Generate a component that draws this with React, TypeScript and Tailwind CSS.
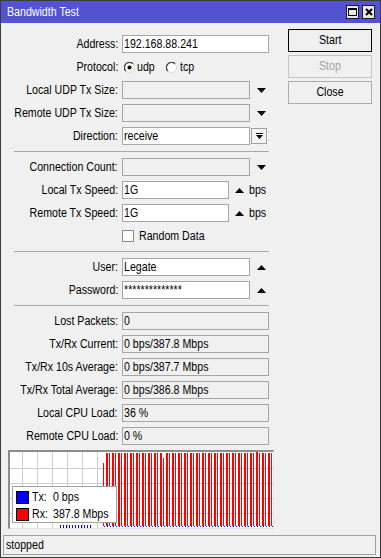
import React from 'react';

type Kids = { children?: React.ReactNode };

// narrow text: the reference uses a condensed face, squeeze a regular one
const N: React.FC<Kids & { o?: string }> = ({ children, o = 'origin-left' }) => (
  <span className={`inline-block scale-x-[0.85] whitespace-nowrap ${o}`}>{children}</span>
);

const Row: React.FC<Kids & { label: string; className?: string }> = ({ label, className = 'mt-[5px]', children }) => (
  <div className={`flex h-[18px] items-center ${className}`}>
    <div className="flex w-[117px] shrink-0 justify-end whitespace-nowrap">
      <N o="origin-right">{label}</N>
    </div>
    {children}
  </div>
);

const Box: React.FC<{ w: string; value?: string; readOnly?: boolean }> = ({ w, value, readOnly }) => (
  <div
    className={`ml-[4px] flex h-[18px] shrink-0 items-center overflow-hidden whitespace-nowrap border border-[#a5a5a5] pl-[1px] ${
      readOnly ? 'bg-[#f0f0f0]' : 'bg-white'
    } ${w}`}
  >
    {value && <N>{value}</N>}
  </div>
);

const TriDown = () => (
  <svg width="9" height="5" viewBox="0 0 9 5">
    <polygon points="0,0 9,0 4.5,5" fill="#000" />
  </svg>
);

const TriUp = () => (
  <svg width="9" height="5" viewBox="0 0 9 5">
    <polygon points="0,5 9,5 4.5,0" fill="#000" />
  </svg>
);

const Zone: React.FC<Kids> = ({ children }) => (
  <div className="flex w-[19px] shrink-0 justify-center pl-[3px]">{children}</div>
);

const Radio: React.FC<{ checked?: boolean }> = ({ checked }) => (
  <svg width="11" height="11" viewBox="0 0 11 11" className="shrink-0">
    <circle cx="5.5" cy="5.5" r="5" fill="#fff" stroke="#d8d8d8" />
    <path d="M1.9 9.1 A5 5 0 0 1 9.1 1.9" fill="none" stroke="#444" strokeWidth="1.3" />
    {checked && <circle cx="5.5" cy="5.5" r="2" fill="#000" />}
  </svg>
);

const Sep = () => <div className="ml-[13px] mt-[6px] h-px w-[255px] bg-[#a8a8a8]" />;

const gridX = Array.from({ length: 17 }, (_, i) => 12 + i * 15);
const gridY = [16, 31, 46, 61];
const rxBars = Array.from({ length: 56 }, (_, i) => ({
  x: 96 + i * 3,
  top: i === 19 ? 6 : i === 50 ? 0 : 1,
}));
const txBars = Array.from({ length: 11 }, (_, i) => 50 + i * 3);

const Chart = () => (
  <div className="relative ml-[7px] mt-[5px] h-[79px] w-[266px] shrink-0 border-b border-l-2 border-r border-t-2 border-b-[#e4e4e4] border-l-[#8c8c8c] border-r-[#e4e4e4] border-t-[#8c8c8c] bg-white">
    <svg width="263" height="76" viewBox="0 0 263 76" className="block">
      {gridX.map(x => (
        <rect key={`gx${x}`} x={x} y={0} width={1} height={76} fill="#cdcdcd" />
      ))}
      {gridY.map(y => (
        <rect key={`gy${y}`} x={0} y={y} width={263} height={1} fill="#cdcdcd" />
      ))}
      <rect x={93} y={11} width={1} height={63} fill="#ff0000" />
      {rxBars.map((b, i) => (
        <rect key={`r${b.x}`} x={b.x} y={b.top} width={i % 2 ? 1 : 2} height={74 - b.top} fill="#ff0000" />
      ))}
      {txBars.map(x => (
        <rect key={`t${x}`} x={x} y={73} width={1} height={3} fill="#0000ff" />
      ))}
      {[93, ...rxBars.map(b => b.x)].map(x => (
        <rect key={`tb${x}`} x={x + 1} y={74} width={1} height={1} fill="#0000ff" />
      ))}
    </svg>
    <div className="absolute left-[2px] top-[34px] flex h-[37px] w-[105px] flex-col gap-[4px] border border-[#a0a0a0] bg-white pl-[3px] pt-[4px]">
      <div className="flex h-[13px] items-center">
        <div className="h-[13px] w-[13px] shrink-0 border border-black bg-[#0000ff]" />
        <span className="ml-[3px] w-[21px] shrink-0">
          <N>Tx:</N>
        </span>
        <N>0 bps</N>
      </div>
      <div className="flex h-[13px] items-center">
        <div className="h-[13px] w-[13px] shrink-0 border border-black bg-[#ff0000]" />
        <span className="ml-[3px] w-[21px] shrink-0">
          <N>Rx:</N>
        </span>
        <N>387.8 Mbps</N>
      </div>
    </div>
  </div>
);

export default function App() {
  return (
    <div className="flex h-[558px] w-[381px] flex-col border border-[#3c3c3c] bg-[#f0f0f0] font-['Liberation_Sans',Arial,sans-serif] text-[12.5px] leading-none text-black">
      {/* title bar */}
      <div className="flex h-[22px] shrink-0 items-center bg-[#5353d2] pl-[6px] pr-[5px]">
        <span className="text-white">
          <N>Bandwidth Test</N>
        </span>
        <div className="ml-auto flex gap-[3px]">
          <div className="flex h-[14px] w-[13px] items-center justify-center border border-[#1a1a1a] bg-[#e8e8e8]">
            <svg width="9" height="8" viewBox="0 0 9 8">
              <rect x="0.5" y="0.5" width="8" height="7" fill="none" stroke="#000" />
              <rect x="0" y="0" width="9" height="2" fill="#000" />
            </svg>
          </div>
          <div className="flex h-[14px] w-[13px] items-center justify-center border border-[#1a1a1a] bg-[#e8e8e8]">
            <svg width="8" height="8" viewBox="0 0 8 8">
              <path d="M1 1 L7 7 M7 1 L1 7" stroke="#000" strokeWidth="2" />
            </svg>
          </div>
        </div>
      </div>

      <div className="flex">
        {/* form */}
        <div className="w-[268px] shrink-0 pt-[12px]">
          <Row label="Address:" className="">
            <Box w="w-[147px]" value="192.168.88.241" />
          </Row>
          <Row label="Protocol:">
            <div className="ml-[6px] flex items-center">
              <Radio checked />
              <span className="ml-[2px]">
                <N>udp</N>
              </span>
              <div className="ml-[8px]">
                <Radio />
              </div>
              <span className="ml-[3px]">
                <N>tcp</N>
              </span>
            </div>
          </Row>
          <Row label="Local UDP Tx Size:">
            <Box w="w-[128px]" readOnly />
            <Zone>
              <TriDown />
            </Zone>
          </Row>
          <Row label="Remote UDP Tx Size:">
            <Box w="w-[128px]" readOnly />
            <Zone>
              <TriDown />
            </Zone>
          </Row>
          <Row label="Direction:">
            <Box w="w-[128px]" value="receive" />
            <div className="ml-[1px] flex h-[16px] w-[16px] items-center justify-center border border-[#a0a0a0] bg-[#f4f4f4]">
              <svg width="7" height="6" viewBox="0 0 7 6">
                <rect x="0" y="0" width="7" height="1" fill="#000" />
                <polygon points="0,2 7,2 3.5,6" fill="#000" />
              </svg>
            </div>
          </Row>
          <Sep />
          <Row label="Connection Count:" className="mt-[6px]">
            <Box w="w-[128px]" readOnly />
            <Zone>
              <TriDown />
            </Zone>
          </Row>
          <Row label="Local Tx Speed:">
            <Box w="w-[107px]" value="1G" />
            <div className="ml-[6px]">
              <TriUp />
            </div>
            <span className="ml-[5px]">
              <N>bps</N>
            </span>
          </Row>
          <Row label="Remote Tx Speed:">
            <Box w="w-[107px]" value="1G" />
            <div className="ml-[6px]">
              <TriUp />
            </div>
            <span className="ml-[5px]">
              <N>bps</N>
            </span>
          </Row>
          <Row label="">
            <div className="ml-[4px] h-[12px] w-[12px] border border-[#8a8a8a] bg-white" />
            <span className="ml-[5px]">
              <N>Random Data</N>
            </span>
          </Row>
          <Sep />
          <Row label="User:" className="mt-[6px]">
            <Box w="w-[128px]" value="Legate" />
            <Zone>
              <TriUp />
            </Zone>
          </Row>
          <Row label="Password:">
            <Box w="w-[128px]" value="**************" />
            <Zone>
              <TriUp />
            </Zone>
          </Row>
          <Sep />
          <Row label="Lost Packets:" className="mt-[6px]">
            <Box w="w-[147px]" value="0" readOnly />
          </Row>
          <Row label="Tx/Rx Current:">
            <Box w="w-[147px]" value="0 bps/387.8 Mbps" readOnly />
          </Row>
          <Row label="Tx/Rx 10s Average:">
            <Box w="w-[147px]" value="0 bps/387.7 Mbps" readOnly />
          </Row>
          <Row label="Tx/Rx Total Average:">
            <Box w="w-[147px]" value="0 bps/386.8 Mbps" readOnly />
          </Row>
          <Row label="Local CPU Load:">
            <Box w="w-[147px]" value="36 %" readOnly />
          </Row>
          <Row label="Remote CPU Load:">
            <Box w="w-[147px]" value="0 %" readOnly />
          </Row>
        </div>

        {/* buttons */}
        <div className="ml-[19px] mt-[6px] flex w-[84px] flex-col gap-[3px]">
          <div className="flex h-[23px] items-center justify-center border border-black">
            <N o="origin-center">Start</N>
          </div>
          <div className="flex h-[23px] items-center justify-center border border-[#c4c4c4] text-[#a3a3a3]">
            <N o="origin-center">Stop</N>
          </div>
          <div className="flex h-[23px] items-center justify-center border border-[#adadad]">
            <N o="origin-center">Close</N>
          </div>
        </div>
      </div>

      <Chart />

      <div className="ml-[2px] mt-[6px] flex h-[20px] w-[373px] shrink-0 items-center border border-[#a0a0a0] pl-[2px]">
        <N>stopped</N>
      </div>
    </div>
  );
}
